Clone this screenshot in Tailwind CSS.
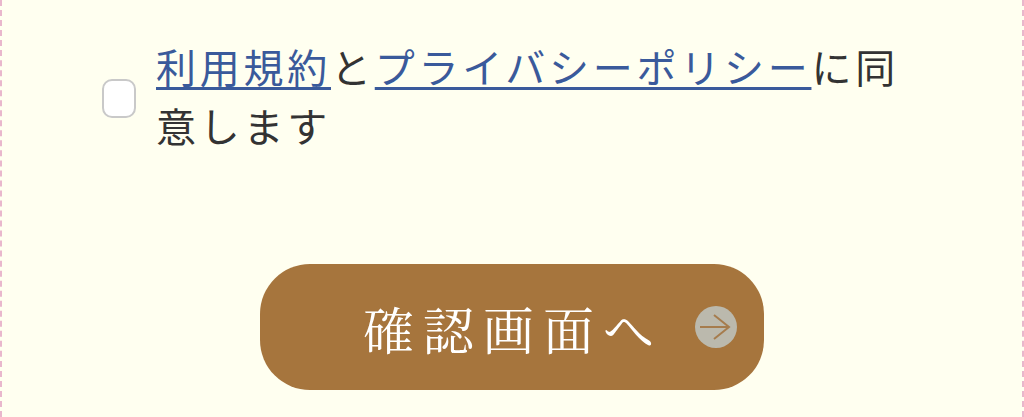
<!DOCTYPE html>
<html lang="ja"><head><meta charset="utf-8"><script src="https://cdn.jsdelivr.net/npm/@tailwindcss/browser@4"></script></head>
<body class="m-0">
<main class="w-[1024px] h-[417px] overflow-hidden bg-[#fffff0] border-x-2 border-dashed border-[#e9b7cc] font-['Noto_Sans_CJK_JP','Noto_Sans',sans-serif]">
  <div class="flex items-center gap-[20px] pl-[100px] pr-[120px] pt-[37px] text-[#333333]">
    <span class="shrink-0 mt-[5px] w-[34px] h-[39px] rounded-[10px] border-2 border-[#c9c9c9] bg-white"></span>
    <p class="text-[40px] leading-[59px] tracking-[3.75px] m-0">
      <a class="text-[#3a5a9b] underline decoration-[3px] underline-offset-[4px]">利用規約</a>と<a class="text-[#3a5a9b] underline decoration-[3px] underline-offset-[4px]">プライバシーポリシー</a>に同意します
    </p>
  </div>
  <div class="flex justify-center mt-[109px]">
    <button class="relative w-[504px] h-[126px] rounded-[50px] bg-[#a6753d] text-white flex items-center pl-[103px] pt-[2px] font-['Noto_Serif_CJK_JP','Noto_Serif_JP','Noto_Sans_CJK_JP',serif]">
      <span class="text-[51px] tracking-[9px] leading-none whitespace-nowrap">確認画面へ</span>
      <svg class="absolute left-[435px] top-[42px] w-[42px] h-[42px]" viewBox="0 0 42 42"><circle cx="21" cy="21" r="21" fill="#bbb9ad"/><path d="M5 21H34M19 9L34 21L19 33" fill="none" stroke="#a67c4d" stroke-width="2"/></svg>
    </button>
  </div>
</main>
</body></html>
